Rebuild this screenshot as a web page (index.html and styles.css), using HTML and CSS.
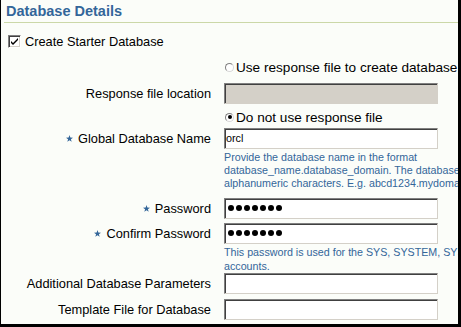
FILE: index.html
```html
<!DOCTYPE html>
<html lang="en">
<head>
<meta charset="utf-8">
<title>Database Details</title>
<link rel="stylesheet" href="styles.css">
</head>
<body>
<div class="frame">
  <div class="header"><h1 class="title">Database Details</h1></div>

  <div class="check-row">
    <span class="checkbox"><svg viewBox="0 0 9 9" width="9" height="9"><path d="M1 4 L3 6 L8 1 L8 3 L3 8 L1 6 Z" fill="#000"/></svg></span>
    <span class="check-label">Create Starter Database</span>
  </div>

  <div class="row r-radio1">
    <span></span>
    <div class="radio-line"><span class="radio"></span><span>Use response file to create database</span></div>
  </div>

  <div class="row r-resp">
    <label class="label">Response file location</label>
    <div class="field disabled"></div>
  </div>

  <div class="row r-radio2">
    <span></span>
    <div class="radio-line"><span class="radio checked"></span><span>Do not use response file</span></div>
  </div>

  <div class="row r-global">
    <label class="label"><svg class="star" viewBox="0 0 10 10" width="7" height="7"><polygon points="5,0 6.2,3.6 10,3.8 7,6.1 8.1,9.8 5,7.6 1.9,9.8 3,6.1 0,3.8 3.8,3.6"/></svg>Global Database Name</label>
    <div class="field">orcl</div>
  </div>

  <div class="row r-help1">
    <span></span>
    <p class="help">Provide the database name in the format<br>database_name.database_domain. The database name must be at most 8<br>alphanumeric characters. E.g. abcd1234.mydomain.com</p>
  </div>

  <div class="row r-pwd">
    <label class="label"><svg class="star" viewBox="0 0 10 10" width="7" height="7"><polygon points="5,0 6.2,3.6 10,3.8 7,6.1 8.1,9.8 5,7.6 1.9,9.8 3,6.1 0,3.8 3.8,3.6"/></svg>Password</label>
    <div class="field pwd"><i></i><i></i><i></i><i></i><i></i><i></i><i></i></div>
  </div>

  <div class="row r-conf">
    <label class="label"><svg class="star" viewBox="0 0 10 10" width="7" height="7"><polygon points="5,0 6.2,3.6 10,3.8 7,6.1 8.1,9.8 5,7.6 1.9,9.8 3,6.1 0,3.8 3.8,3.6"/></svg>Confirm Password</label>
    <div class="field pwd"><i></i><i></i><i></i><i></i><i></i><i></i><i></i></div>
  </div>

  <div class="row r-help2">
    <span></span>
    <p class="help">This password is used for the SYS, SYSTEM, SYSMAN and DBSNMP<br>accounts.</p>
  </div>

  <div class="row r-add">
    <label class="label">Additional Database Parameters</label>
    <div class="field"></div>
  </div>

  <div class="row r-tpl">
    <label class="label">Template File for Database</label>
    <div class="field"></div>
  </div>
</div>
</body>
</html>
```

FILE: styles.css
```css
* { box-sizing: border-box; }
html, body { margin: 0; padding: 0; }
body {
  width: 461px;
  height: 327px;
  overflow: hidden;
  font-family: "Liberation Sans", Arial, sans-serif;
  font-size: 12.8px;
  color: #000;
}
.frame {
  width: 461px;
  height: 327px;
  background: #fbfdf9;
  border-left: 1px solid #000;
  border-right: 3px solid #000;
  border-bottom: 3px solid #000;
  overflow: hidden;
}
.header {
  margin: 0 0 0 3px;
  padding: 3px 0 2px 2px;
  border-bottom: 1px solid #cbd8a8;
}
.title {
  margin: 0;
  font-size: 14.5px;
  line-height: 17px;
  font-weight: bold;
  color: #336699;
}
.check-row {
  display: flex;
  align-items: center;
  height: 17px;
  margin-top: 10px;
  padding-left: 7px;
}
.checkbox {
  width: 13px;
  height: 13px;
  background: #fff;
  border: 1px solid;
  border-color: #808080 #fff #fff #808080;
  box-shadow: inset 1px 1px 0 #404040, inset -1px -1px 0 #d4d0c8;
  display: flex;
  align-items: center;
  justify-content: center;
  margin-right: 4px;
}
.checkbox svg { display: block; }
.row {
  display: grid;
  grid-template-columns: 210px 214px;
  column-gap: 13px;
  align-items: center;
}
.label {
  text-align: right;
  white-space: nowrap;
  display: flex;
  justify-content: flex-end;
  align-items: center;
}
.star {
  fill: #336699;
  margin-right: 5px;
  flex: none;
}
.radio-line {
  display: flex;
  align-items: center;
  height: 18px;
  white-space: nowrap;
  padding-left: 1px;
  font-size: 13.6px;
}
.radio {
  width: 9px;
  height: 9px;
  border-radius: 50%;
  background: #fff;
  border: 1px solid;
  border-color: #808080 #d8d8d8 #d8d8d8 #808080;
  margin-right: 2px;
  position: relative;
  flex: none;
}
.radio.checked::after {
  content: "";
  position: absolute;
  left: 1.5px;
  top: 1.5px;
  width: 4px;
  height: 4px;
  border-radius: 50%;
  background: #000;
}
.field {
  height: 21px;
  width: 214px;
  background: #fff;
  border: 1px solid;
  border-color: #808080 #d4d0c8 #d4d0c8 #808080;
  box-shadow: inset 1px 1px 0 #404040;
  padding-left: 1px;
  font-size: 10.8px;
  line-height: 19px;
  display: flex;
  align-items: center;
}
.field.disabled { background: #d4d0c8; }
.field.pwd { padding-left: 3px; gap: 2px; }
.field.pwd i {
  width: 6px;
  height: 6px;
  border-radius: 50%;
  background: #000;
  display: block;
}
.help {
  margin: 0;
  font-size: 10.7px;
  line-height: 13.3px;
  color: #336699;
  white-space: nowrap;
}
.r-radio1 { margin-top: 8px; }
.r-resp { margin-top: 7px; }
.r-radio2 { margin-top: 4px; }
.r-global { margin-top: 2px; }
.r-help1 { margin-top: 1.5px; }
.r-pwd { margin-top: 7.5px; }
.r-conf { margin-top: 4px; }
.r-help2 { margin-top: 2.5px; }
.r-add { margin-top: 0; }
.r-tpl { margin-top: 5px; }
```
